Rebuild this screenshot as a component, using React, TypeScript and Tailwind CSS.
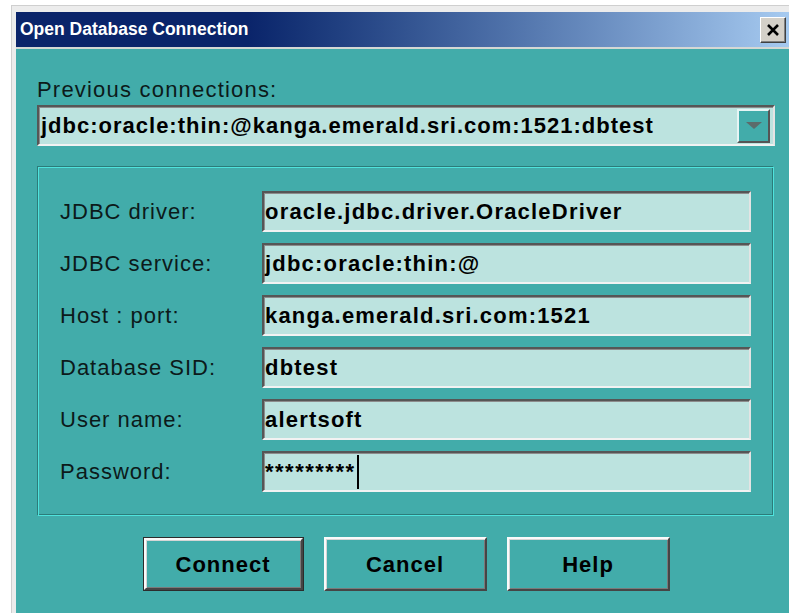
import React from "react";

const fields = [
  { label: "JDBC driver:", value: "oracle.jdbc.driver.OracleDriver" },
  { label: "JDBC service:", value: "jdbc:oracle:thin:@" },
  { label: "Host : port:", value: "kanga.emerald.sri.com:1521" },
  { label: "Database SID:", value: "dbtest" },
  { label: "User name:", value: "alertsoft" },
  { label: "Password:", value: "*********", password: true },
];

// sunken text box, dark on top/left and light on bottom/right
function Field({ value, password }: { value: string; password?: boolean }) {
  return (
    <div className="h-[41px] flex items-center bg-[#bce3df] border-t-2 border-l-2 border-t-[#565656] border-l-[#565656] border-b-2 border-r-2 border-b-[#f2f2f2] border-r-[#e4e4e4] shadow-[inset_1px_1px_0_#8c8c8c] pl-[1px] overflow-hidden">
      <span
        className={
          password
            ? "text-[22px] font-bold tracking-[1.5px] text-black leading-none whitespace-nowrap"
            : "text-[22px] font-bold tracking-[1.2px] text-black leading-none whitespace-nowrap"
        }
      >
        {value}
      </span>
      {password && <span className="ml-[1px] w-[2px] h-[34px] bg-black" />}
    </div>
  );
}

function Button({ label, primary }: { label: string; primary?: boolean }) {
  const inner = (
    <div className="w-full h-full flex items-center justify-center bg-[#42acaa] border-t-2 border-l-2 border-t-[#fafafa] border-l-[#fafafa] border-b-2 border-r-2 border-b-[#454545] border-r-[#454545] shadow-[inset_1px_1px_0_#d6d6d6,inset_-1px_-1px_0_#7a7a7a]">
      <span className="text-[22px] font-bold tracking-[1px] text-black">{label}</span>
    </div>
  );
  return primary ? (
    <div className="w-[161px] h-[54px] border border-[#2c2c2c]">{inner}</div>
  ) : (
    <div className="w-[163px] h-[54px]">{inner}</div>
  );
}

export default function App() {
  return (
    <div className="w-[789px] h-[615px] overflow-hidden bg-white pl-[11px] pt-[5px] font-['Liberation_Sans',Arial,sans-serif]">
      <div className="h-[608px] flex flex-col bg-[#ececec] border-l border-t border-[#cfcfcf] pl-[4px] pt-[6px]">
        {/* title bar */}
        <div className="h-[35px] flex items-center justify-between pl-[4px] pr-[3px] bg-linear-to-r from-[#0a246a] via-[#0a246a] via-[30%] to-[#a6caf0]">
          <span className="text-white text-[17.5px] font-bold">Open Database Connection</span>
          <div className="w-[26px] h-[26px] flex items-center justify-center bg-[#d4d0c8] border-t border-l border-t-white border-l-white border-b border-r border-b-[#404040] border-r-[#404040] shadow-[inset_-1px_-1px_0_#808080]">
            <svg width="14" height="12" viewBox="0 0 14 12">
              <path d="M2 1 L12 11 M12 1 L2 11" stroke="#000" strokeWidth="2.6" />
            </svg>
          </div>
        </div>
        <div className="h-[2px] bg-[#d4d8d4]" />

        {/* dialog body */}
        <div className="flex-1 bg-[#42acaa] pl-[21px] pt-[28px]">
          <div className="text-[22px] leading-[26px] tracking-[1.2px] text-[#0c1a1a]">Previous connections:</div>

          <div className="mt-[2px] w-[738px] h-[41px] flex items-center bg-[#bce3df] border-t-2 border-l-2 border-t-[#565656] border-l-[#565656] border-b-2 border-r-2 border-b-[#f2f2f2] border-r-[#e4e4e4] shadow-[inset_1px_1px_0_#8c8c8c]">
            <span className="flex-1 pl-[2px] text-[22px] font-bold tracking-[1px] text-black whitespace-nowrap overflow-hidden">
              jdbc:oracle:thin:@kanga.emerald.sri.com:1521:dbtest
            </span>
            <div className="w-[33px] h-[34px] mr-[3px] flex items-center justify-center bg-[#42acaa] border-t-2 border-l-2 border-t-[#e6f4f4] border-l-[#e6f4f4] border-b-2 border-r-2 border-b-[#555] border-r-[#555]">
              <svg width="16" height="8" viewBox="0 0 16 8">
                <path d="M0 0 H16 L8 7 Z" fill="#5c6b6b" />
              </svg>
            </div>
          </div>

          {/* etched group box */}
          <div className="mt-[20px] w-[737px] h-[350px] border-t border-l border-t-[#2c7c79] border-l-[#2c7c79] border-b border-r border-b-[#4fe3dd] border-r-[#4fe3dd] shadow-[inset_1px_1px_0_#4fe3dd,inset_-1px_-1px_0_#2c7c79] pt-[24px] pl-[22px] pr-[22px]">
            <div className="grid grid-cols-[202px_1fr] gap-y-[11px] items-center">
              {fields.map((f) => (
                <React.Fragment key={f.label}>
                  <span className="text-[22px] tracking-[1px] text-[#0c1a1a] whitespace-nowrap">{f.label}</span>
                  <Field value={f.value} password={f.password} />
                </React.Fragment>
              ))}
            </div>
          </div>

          <div className="mt-[21px] w-[738px] flex justify-center gap-[20px]">
            <Button label="Connect" primary />
            <Button label="Cancel" />
            <Button label="Help" />
          </div>
        </div>
      </div>
    </div>
  );
}
